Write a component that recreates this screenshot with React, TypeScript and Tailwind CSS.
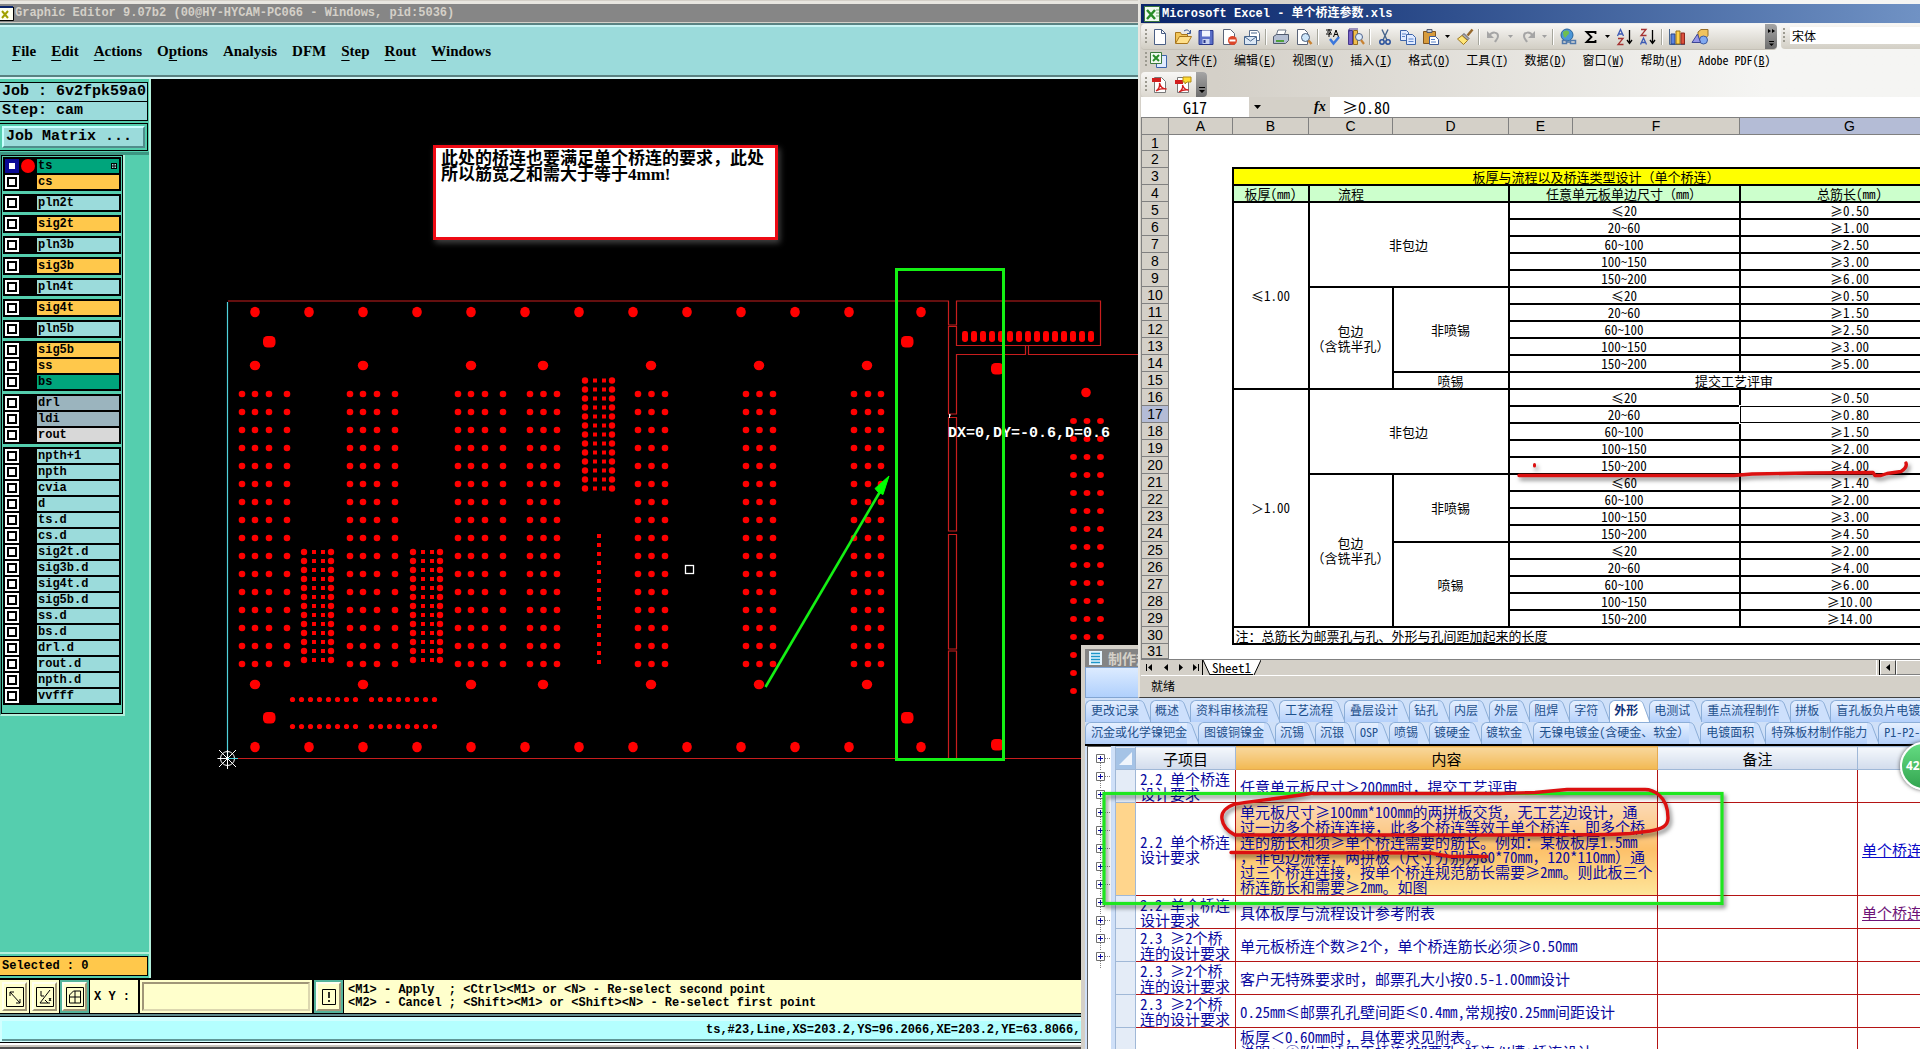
import type { ReactNode } from "react";
import clsx from "clsx";

/* ---------- Graphic editor data ---------- */

type Layer = { name: string; tone: string };

const CYAN = "bg-[#9bdbdb]";
const GOLD = "bg-[#ffc84b]";
const GREEN = "bg-[#00a57c]";
const SLATE = "bg-[#9bb4be]";

const layer = (name: string, tone: string): Layer => ({ name, tone });

const layerGroups: Layer[][] = [
    [layer("ts", GREEN), layer("cs", GOLD)],
    [layer("pln2t", CYAN)],
    [layer("sig2t", GOLD)],
    [layer("pln3b", CYAN)],
    [layer("sig3b", GOLD)],
    [layer("pln4t", CYAN)],
    [layer("sig4t", GOLD)],
    [layer("pln5b", CYAN)],
    [layer("sig5b", GOLD), layer("ss", GOLD), layer("bs", GREEN)],
    [layer("drl", SLATE), layer("ldi", SLATE), layer("rout", "bg-[#d8d8d8]")],
    [
        "npth+1", "npth", "cvia", "d", "ts.d", "cs.d", "sig2t.d", "sig3b.d", "sig4t.d",
        "sig5b.d", "ss.d", "bs.d", "drl.d", "rout.d", "npth.d", "vvfff"
    ].map((name) => layer(name, CYAN))
];

// [before, underlined letter, after]
const editorMenu = [
    ["", "F", "ile"],
    ["", "E", "dit"],
    ["", "A", "ctions"],
    ["O", "p", "tions"],
    ["Analysis", "", ""],
    ["DFM", "", ""],
    ["", "S", "tep"],
    ["", "R", "out"],
    ["", "W", "indows"]
];

const range = (count: number, start: number, step: number) =>
    Array.from({ length: count }, (_, i) => start + i * step);

const edgeHoles = [...range(12, 255, 54), 921];
const innerHoles = [255, 363, 471, 543, 651, 759, 867];
const pinColumns = [
    242, 255, 269, 287, 350, 363, 377, 395, 458, 471, 485, 503,
    530, 543.5, 557, 638, 651.5, 665, 746, 759.5, 773, 854, 868, 881
];
const denseBlocks = [
    { x: 304, y: 552 },
    { x: 413, y: 552 },
    { x: 585, y: 380.5 }
];

/* ---------- Editor ---------- */

function BoardDrawing() {
    return (
        <svg className="absolute inset-0 h-full w-full" aria-label="Board">
            <g transform="translate(-151 -79)">
                <g fill="none" stroke="#c81e1e" strokeWidth="1.2">
                    <path d="M228 301H948.5V325H956.5V301H1100.5V345.5H956.5V326.5H948.5V414H956.5V354.5H1025.5V345.5M1028.5 345.5V354.5H1200" />
                    <path d="M948.5 417.5H956.5V531H948.5ZM948.5 534.5H956.5V649H948.5ZM948.5 758.5V651H956.5V758.5" />
                    <path d="M228 758.5H948.5M956.5 758.5H1200" />
                </g>
                <path d="M227.5 302V758" stroke="#50d2dc" strokeWidth="1.2" />

                <g fill="#ff0000">
                    {edgeHoles.map((x) => (
                        <g key={x}>
                            <ellipse cx={x} cy="312" rx="4.8" ry="5.3" />
                            <ellipse cx={x} cy="747" rx="4.8" ry="5.3" />
                        </g>
                    ))}
                    {innerHoles.map((x) => (
                        <g key={x}>
                            <ellipse cx={x} cy="365.5" rx="5.2" ry="4.8" />
                            <ellipse cx={x} cy="684.5" rx="5.2" ry="4.8" />
                        </g>
                    ))}
                    {[[269, 341.5], [269, 717.5], [907, 341.5], [907, 717.5], [997, 368.5], [997, 744.5]].map(([x, y]) => (
                        <rect key={`${x}-${y}`} x={x - 6} y={y - 5.5} width="12.5" height="11.5" rx="4.5" />
                    ))}
                    <circle cx="1086" cy="392.5" r="4.8" />

                    {range(16, 394, 18).map((y) =>
                        pinColumns.map((x) => <circle key={`${x}-${y}`} cx={x} cy={y} r="3.3" />)
                    )}
                    {range(16, 421, 18).map((y) =>
                        [1073.5, 1087, 1100.5].map((x) => <ellipse key={`${x}-${y}`} cx={x} cy={y} rx="3.4" ry="2.9" />)
                    )}
                    {denseBlocks.map((block) =>
                        range(13, block.y, 9).map((y) => (
                            <g key={`${block.x}-${y}`}>
                                <circle cx={block.x} cy={y} r="3.2" />
                                <rect x={block.x + 8} y={y - 2} width="4" height="4" />
                                <rect x={block.x + 17} y={y - 2} width="4" height="4" />
                                <circle cx={block.x + 27} cy={y} r="3.2" />
                            </g>
                        ))
                    )}
                    {range(15, 536, 9).map((y) => (
                        <rect key={y} x="597" y={y - 2} width="4" height="4" />
                    ))}
                    {[699.5, 726.5].map((y) =>
                        [...range(8, 292.5, 9), ...range(8, 371.5, 9)].map((x) => (
                            <circle key={`${x}-${y}`} cx={x} cy={y} r="2.6" />
                        ))
                    )}
                    {range(15, 965, 9).map((x) => (
                        <rect key={x} x={x - 3} y="331" width="6" height="11" rx="2.4" />
                    ))}
                </g>

                {/* Datum */}
                <g fill="none" stroke="#fff">
                    <circle cx="227.5" cy="758.5" r="7" />
                    <path d="M217.5 758.5H232M227.5 750V769M219 750L236 767M219 767L236 750" />
                    <path d="M228 758.5H238" stroke="#50d2dc" />
                </g>
                <rect x="685.5" y="565.5" width="8" height="8" fill="none" stroke="#fff" strokeWidth="1.3" />
                <path d="M949.5 414V418M949 415H951" stroke="#fff" />
                <text x="948" y="437" fill="#fff" className="font-['Liberation_Mono',monospace] text-[15px] font-bold">
                    DX=0,DY=-0.6,D=0.6
                </text>

                {/* Markup */}
                <rect x="896.5" y="269.5" width="107" height="490" fill="none" stroke="#14f014" strokeWidth="3" />
                <path d="M765.5 687L881 490" stroke="#14f014" strokeWidth="2.6" />
                <path d="M889 476L875 488.5L878 492L883 494.5Z" fill="#00ff00" stroke="#00ff00" />
            </g>
        </svg>
    );
}

function LayerRow({ name, tone, active }: Layer & { active: boolean }) {
    return (
        <label className="flex h-3.5 items-center">
            <input
                type="checkbox"
                className={clsx(
                    "size-3.5 appearance-none border-2 p-0.5 before:block before:size-1.5 before:bg-white",
                    active ? "border-[#0a0a96] bg-[#0a0a96]" : "border-white bg-black"
                )}
            />
            <span className="flex w-[18px] justify-center">
                {active && <span className="size-3.5 rounded-full bg-[#ff0000]" />}
            </span>
            <span className={clsx("flex h-3.5 flex-1 items-center justify-between pr-0.5 pl-px", tone)}>
                {name}
                {active && (
                    <svg width="6" height="6" viewBox="0 0 6 6" className="text-black">
                        <path d="M0 0h6v6H0z" />
                        <path d="M1 1h1.5v1.5H1zM3.5 1H5v1.5H3.5zM1 3.5h1.5V5H1zM3.5 3.5H5V5H3.5z" fill="#9bdbdb" />
                    </svg>
                )}
            </span>
        </label>
    );
}

function Sidebar() {
    return (
        <aside className="flex w-[151px] shrink-0 flex-col border-r-2 border-[#b4f0dc] bg-[#55ceae] pt-[3px] font-['Liberation_Mono',monospace] text-black">
            <div className="mr-px border border-l-0 border-black bg-[#9bdbdb] pl-0.5 text-[15px] leading-[18px] font-bold whitespace-nowrap">
                Job : 6v2fpk59a0
            </div>
            <div className="mr-px border border-t-0 border-l-0 border-black bg-[#9bdbdb] pl-0.5 text-[15px] leading-[18px] font-bold">
                Step: cam
            </div>
            <div className="mt-0.5 mr-px border border-l-0 border-black p-0.5">
                <button className="block w-full border-2 border-t-[#c8ffff] border-r-[#508c8c] border-b-[#508c8c] border-l-[#c8ffff] bg-[#9bdbdb] pl-0.5 text-left text-[15px] leading-[18px] font-bold">
                    Job Matrix ...
                </button>
            </div>
            <div className="mt-px h-[3px] bg-[#3c9682]" />

            <div className="mr-6 border-r-2 border-b-2 border-l border-[#b4f0dc] border-l-[#3c9682]">
                <div className="flex flex-col gap-[3px] border border-black px-px pt-px pb-2 text-xs leading-[14px] font-bold">
                    {layerGroups.map((group, i) => (
                        <div key={i} className="flex flex-col gap-0.5 bg-black p-0.5">
                            {group.map((item) => (
                                <LayerRow key={item.name} {...item} active={item.name === "ts"} />
                            ))}
                        </div>
                    ))}
                </div>
            </div>

            <div className="mt-auto h-0.5 bg-[#b4f0dc]" />
            <div className="mt-0.5 mr-px mb-0.5 border border-l-0 border-black bg-[#ffc84b] pl-0.5 text-xs leading-[18px] font-bold">
                Selected : 0
            </div>
        </aside>
    );
}

function PromptButton({ label, teal, children }: { label: string; teal?: boolean; children: ReactNode }) {
    return (
        <div className={clsx("border-r border-black p-0.5", teal && "bg-[#55b49b]")}>
            <button
                aria-label={label}
                className="flex h-[29px] w-[25px] items-center justify-center border-2 border-t-[#fffff0] border-r-[#a09678] border-b-[#a09678] border-l-[#fffff0] bg-[#ffffcc]"
            >
                <svg width="18" height="20" viewBox="0 0 18 20" fill="none" stroke="#000">
                    {children}
                </svg>
            </button>
        </div>
    );
}

function PromptBar() {
    return (
        <div className="flex h-[33px] shrink-0 bg-[#ffffcc] font-['Liberation_Mono',monospace] text-xs font-bold text-black">
            <PromptButton label="Snap">
                <path d="M.5 .5h17v19H.5zM4 5L14 16M4 9V5h4M14 12v4h-4" />
            </PromptButton>
            <PromptButton label="Angle">
                <path d="M.5 .5h17v19H.5zM14 3L4 16h10M5 4v5h3M9 13l3 3M13 11l2 3M15 11l-2 3" />
            </PromptButton>
            <PromptButton label="Grid" teal>
                <path d="M.5 .5h17v19H.5zM3.500 8l4-4h7v12h-11zM9 4v12M3 10h12" />
            </PromptButton>
            <label htmlFor="xy" className="flex w-12 items-center pl-1">
                X Y :
            </label>
            <div className="border-x-2 border-black p-0.5">
                <input
                    id="xy"
                    className="block h-[29px] w-[168px] border-2 border-t-[#a09678] border-r-[#dcd7af] border-b-[#dcd7af] border-l-[#a09678] bg-[#ffffcc] px-1 outline-none"
                />
            </div>
            <PromptButton label="Execute" teal>
                <path d="M2.500 2.500h13v15h-13z" />
                <path d="M9 5v6M9 13v2" strokeWidth="1.600" />
            </PromptButton>
            <div className="flex flex-1 flex-col justify-center pl-1 leading-[13px] whitespace-pre">
                <div>{"<M1> - Apply  ; <Ctrl><M1> or <N> - Re-select second point"}</div>
                <div>{"<M2> - Cancel ; <Shift><M1> or <Shift><N> - Re-select first point"}</div>
            </div>
        </div>
    );
}

function GraphicEditor() {
    return (
        <section className="flex h-full flex-col">
            <div className="h-1 shrink-0 border-t border-[#d4d0c8] bg-[#e8e6e0]" />
            <header className="flex h-[19px] shrink-0 items-center border-b border-[#d4d0c8] bg-[#868686] font-['Liberation_Mono',monospace] text-xs font-bold text-[#d4d0c8]">
                <svg width="15" height="16" viewBox="0 0 15 16">
                    <path d="M0 1h13v14H0z" fill="#fffff0" />
                    <path d="M0 1h13v2H0z" fill="#0a246a" />
                    <path d="M2 6l6 7M8 6l-6 7" stroke="#a0a000" strokeWidth="2" />
                    <path d="M13.500 2v13.500H0" fill="none" stroke="#000" />
                </svg>
                <h1>Graphic Editor 9.07b2 (00@HY-HYCAM-PC066 - Windows, pid:5036)</h1>
            </header>
            <nav className="flex h-[54px] shrink-0 items-center gap-[15px] border-y-2 border-[#5a8282] bg-[#9bdbdb] px-3 pt-0.5 font-['Liberation_Serif',serif] text-[15px] font-bold text-black shadow-[inset_0_2px_0_#c8f5f5]">
                {editorMenu.map(([before, key, after]) => (
                    <button key={before + key + after}>
                        {before}
                        {key && <span className="underline underline-offset-4">{key}</span>}
                        {after}
                    </button>
                ))}
            </nav>
            <div className="h-0.5 shrink-0 bg-[#d2f5f5]" />

            <div className="flex min-h-0 flex-1 bg-black pb-0.5">
                <Sidebar />
                <div className="relative flex-1">
                    <BoardDrawing />
                    <p className="absolute top-[66px] left-[282px] h-[95px] w-[345px] border-3 border-[#ee0a14] bg-white px-[5px] pt-[3px] font-['Liberation_Serif','Noto_Sans_CJK_SC',serif] text-[17px] leading-4 font-bold text-black shadow-[2px_3px_6px_#444]">
                        此处的桥连也要满足单个桥连的要求，此处所以筋宽之和需大于等于4mm!
                    </p>
                </div>
            </div>

            <PromptBar />
            <div className="h-[3px] shrink-0 border-t border-black bg-[#5f8a8c]" />
            <footer className="h-[27px] shrink-0 border-y border-black bg-[#d2ffff] font-['Liberation_Mono',monospace] text-xs font-bold text-black">
                <div className="mx-0.5 mt-1 h-5 border-b-2 border-[#5f9696] bg-[#b4ffff] pl-[704px] leading-[18px] whitespace-nowrap">
                    ts,#23,Line,XS=203.2,YS=96.2066,XE=203.2,YE=63.8066,
                </div>
            </footer>
            <div className="h-1 shrink-0 border-t-2 border-white bg-[#c8c4bc]" />
            <div className="h-0.5 shrink-0 bg-[#505050]" />
        </section>
    );
}

/* ---------- Excel ---------- */

const CJK = "font-['Noto_Sans_Mono_CJK_SC','Noto_Sans_CJK_SC',sans-serif]";

const excelMenu = [
    ["文件", "F"],
    ["编辑", "E"],
    ["视图", "V"],
    ["插入", "I"],
    ["格式", "O"],
    ["工具", "T"],
    ["数据", "D"],
    ["窗口", "W"],
    ["帮助", "H"],
    ["Adobe PDF", "B"]
];

function Tool({ label, children }: { label: string; children: ReactNode }) {
    return (
        <button aria-label={label} className="flex w-[23px] justify-center">
            <svg width="18" height="18" viewBox="0 0 18 18" fill="none">
                {children}
            </svg>
        </button>
    );
}

function Caret({ dim }: { dim?: boolean }) {
    return (
        <button aria-label="More" className="flex w-[11px] justify-center">
            <svg width="5" height="3" viewBox="0 0 5 3" className={dim ? "fill-[#a0a0a0]" : "fill-black"}>
                <path d="M0 0h5L2.500 3z" />
            </svg>
        </button>
    );
}

const Separator = () => (
    <span className="flex w-1.5 justify-center">
        <span className="h-4 w-0.5 border-r border-white bg-[#a6a69c]" />
    </span>
);

function Grip() {
    return (
        <svg width="3" height="16" viewBox="0 0 3 16" fill="#9c9a90">
            <path d="M0 0h2v2H0zM0 4h2v2H0zM0 8h2v2H0zM0 12h2v2H0z" />
        </svg>
    );
}

const page = "M3.500 1.500h7l4 4v11h-11z";

function StandardToolbar() {
    return (
        <div className="flex h-[25px] items-center">
            <div className="flex h-full w-[636px] shrink-0 items-center rounded-sm bg-linear-to-b from-[#f8f7f5] to-[#d2cec4] pl-1 shadow-[0_1px_0_#c4c0b6]">
                <Grip />
                <Tool label="New">
                    <path d={page} fill="#fff" stroke="#4a5f85" />
                    <path d="M10.500 1.500v4h4" stroke="#4a5f85" />
                </Tool>
                <Tool label="Open">
                    <path d="M1.500 15V4.500h5l1 2h6V9" fill="#f2c65a" stroke="#a9761a" />
                    <path d="M1.500 15.500l4-7h12l-4 7z" fill="#ffe08a" stroke="#a9761a" />
                    <path d="M10 3c3-2 5-1 6 2M16.500 2v3.500H13" stroke="#3c5a96" />
                </Tool>
                <Tool label="Save">
                    <path d="M2 2.500h14v14H2z" fill="#5a6ec8" stroke="#28378c" />
                    <path d="M5 2.500h8v6H5z" fill="#f0f4ff" />
                    <path d="M5.500 11h7v5h-7z" fill="#c8d2f0" />
                    <path d="M6.500 12h2v3h-2z" fill="#28378c" />
                </Tool>
                <Tool label="Permission">
                    <path d={page} fill="#fff" stroke="#5a6478" />
                    <circle cx="12.500" cy="12.500" r="4.500" fill="#dc4628" />
                    <path d="M9.500 12.500h6" stroke="#fff" strokeWidth="2" />
                </Tool>
                <Tool label="Mail">
                    <path d="M6.500 2.500h8l2 3v7h-10z" fill="#fff" stroke="#5a6e8c" />
                    <path d="M1.500 8.500h12v8h-12z" fill="#dce8f5" stroke="#46648c" />
                    <path d="M2 9l5.500 4L13 9M8 5h6" stroke="#46648c" />
                </Tool>
                <Separator />
                <Tool label="Print">
                    <path d="M6 2h8l-2 6H4z" fill="#fff" stroke="#6e7888" />
                    <path d="M1.500 8.500l3-2h12v6l-3 3h-12z" fill="#b4bed2" stroke="#505a6e" />
                    <path d="M4 13h8" stroke="#50a03c" strokeWidth="2" />
                </Tool>
                <Tool label="Preview">
                    <path d="M2.500 1.500h7l3 3v12h-10z" fill="#fff" stroke="#5a6478" />
                    <circle cx="10.500" cy="9.500" r="4" fill="#cde6fa" stroke="#465a78" />
                    <path d="M13.500 12.500l3 3.500" stroke="#c88232" strokeWidth="2.500" />
                </Tool>
                <Separator />
                <Tool label="Spelling">
                    <path d="M2 2h6M5 1v2M3 4h4L5 6v3M2 6h6M9.500 9L12 2l2.500 7M10.500 6.500h3" stroke="#000" />
                    <path d="M6 11l3.500 4.500L15 9" stroke="#3c78dc" strokeWidth="2.500" />
                </Tool>
                <Tool label="Research">
                    <path d="M1.500 2.500h4v14h-4z" fill="#7864c8" stroke="#46378c" />
                    <path d="M6.500 2.500h4v14h-4z" fill="#f0be50" stroke="#966e1e" />
                    <path d="M2 1h9M2 1v3" stroke="#46378c" />
                    <circle cx="12" cy="9" r="3.500" fill="#dcebfa" stroke="#50648c" />
                    <path d="M14 12l3 4" stroke="#c88232" strokeWidth="2.200" />
                </Tool>
                <Separator />
                <Tool label="Cut">
                    <path d="M6 1.500l5 10.500M12 1.500L7 12" stroke="#46648c" strokeWidth="1.400" />
                    <circle cx="6" cy="14" r="2.200" stroke="#28509b" strokeWidth="1.500" />
                    <circle cx="12" cy="14" r="2.200" stroke="#28509b" strokeWidth="1.500" />
                </Tool>
                <Tool label="Copy">
                    <path d="M1.500 2.500h6l2 2v8h-8z" fill="#e1ebff" stroke="#3c64aa" />
                    <path d="M7.500 6.500h6l3 3v7h-9z" fill="#e1ebff" stroke="#3c64aa" />
                    <path d="M9.500 11h5M9.500 13.500h5M3 6h4M3 8.500h3" stroke="#5a82c8" />
                </Tool>
                <Tool label="Paste">
                    <path d="M1.500 3.500h12v12h-12z" fill="#d79b3c" stroke="#82551e" />
                    <path d="M5 1.500h5v3H5z" fill="#c8cdd7" stroke="#505a6e" />
                    <path d="M7.500 8.500h6l3 3v5h-9z" fill="#fff" stroke="#3c5a96" />
                    <path d="M9 11.500h4M9 14h5" stroke="#5a82c8" />
                </Tool>
                <Caret />
                <Tool label="Format painter">
                    <path d="M16.500 1.500l-5 6" stroke="#96692d" strokeWidth="2.500" />
                    <path d="M8 5.500l5 5-1.500 1.500-5.500-4.500z" fill="#aaaaaf" stroke="#5a5a64" />
                    <path d="M6 7.500l5.500 5-4 4-6-5.500z" fill="#ffe678" stroke="#a0781e" />
                </Tool>
                <Separator />
                <Tool label="Undo">
                    <path d="M4 8c3-5 9-4 9 0 0 3-2 4-3 6" stroke="#a5a5a5" strokeWidth="2" />
                    <path d="M2 3v7h7z" fill="#a5a5a5" />
                </Tool>
                <Caret dim />
                <Tool label="Redo">
                    <path d="M14 8c-3-5-9-4-9 0 0 3 2 4 3 6" stroke="#a5a5a5" strokeWidth="2" />
                    <path d="M16 3v7H9z" fill="#a5a5a5" />
                </Tool>
                <Caret dim />
                <Separator />
                <Tool label="Hyperlink">
                    <circle cx="8" cy="7" r="6" fill="#4b96d7" stroke="#28649b" />
                    <path d="M4 4c2-2 5-2 6 0s-2 3-3 5-3-1-3-5z" fill="#6ebe50" />
                    <path d="M3.500 12.500h4v3h-4zM11.500 12.500h5v3h-5z" stroke="#5078aa" strokeWidth="1.500" />
                    <path d="M7 14h5" stroke="#5078aa" strokeWidth="1.500" />
                </Tool>
                <Tool label="Sum">
                    <path d="M13.500 6V4H4.500l5 5-5 5h9v-2" stroke="#000" strokeWidth="1.800" />
                </Tool>
                <Caret />
                <Tool label="Sort ascending">
                    <path d="M1.500 8l3-6.500L7.500 8M2.500 6h4" stroke="#3c5ab4" strokeWidth="1.300" />
                    <path d="M2 10.500h5l-5 6h5.500" stroke="#a53232" strokeWidth="1.300" />
                    <path d="M13.500 2v13M11 12l2.500 3.500L16 12" stroke="#000" strokeWidth="1.300" />
                </Tool>
                <Tool label="Sort descending">
                    <path d="M2 1.500h5l-5 6h5.500" stroke="#a53232" strokeWidth="1.300" />
                    <path d="M1.500 16.500l3-6.500 3 6.500M2.500 14.500h4" stroke="#3c5ab4" strokeWidth="1.300" />
                    <path d="M13.500 2v13M11 12l2.500 3.500L16 12" stroke="#000" strokeWidth="1.300" />
                </Tool>
                <Separator />
                <Tool label="Chart">
                    <path d="M1.500 1v15.500H17" stroke="#46648c" />
                    <path d="M3 6h4v10H3z" fill="#5a82dc" stroke="#28468c" />
                    <path d="M8 3h4v13H8z" fill="#ffd24b" stroke="#966e14" />
                    <path d="M13 5h3.500v11H13z" fill="#dc503c" stroke="#8c281e" />
                </Tool>
                <Tool label="Drawing">
                    <path d="M7 4l3-2.500h7v6l-2.500 3H7z" fill="#f0c35f" stroke="#966e28" />
                    <circle cx="12.500" cy="12" r="4" fill="#82aaf0" stroke="#3c5aa0" />
                    <path d="M1 14.500L6.500 6l3 8.500z" fill="#9696e6" stroke="#3c4696" />
                </Tool>
                <button aria-label="Toolbar options" className="ml-auto flex h-full w-3 items-center justify-center rounded-r-sm bg-linear-to-b from-[#a5a5a5] to-[#6e6e6e]">
                    <svg width="7" height="20" viewBox="0 0 7 20">
                        <path d="M0 2l3 2-3 2zM4 2l3 2-3 2zM1 14h5v1H1zM1 16.500h5L3.500 19z" />
                    </svg>
                </button>
            </div>
            <div className="ml-1 flex h-full flex-1 items-center gap-1 rounded-l-sm bg-linear-to-b from-[#f8f7f5] to-[#d2cec4] pb-0.5 pl-0.5">
                <Grip />
                <input aria-label="Font" defaultValue="宋体" className="h-[17px] min-w-0 flex-1 bg-white pl-0.5 text-xs outline-none" />
            </div>
        </div>
    );
}

const columns = ["A", "B", "C", "D", "E", "F", "G"];

type Cell = { text: ReactNode; rows?: number; cols?: number; look?: string; picked?: boolean };

const size = (text: string): Cell => ({ text, cols: 2 });
const total = (text: string): Cell => ({ text });
const halfHole = (
    <>
        包边
        <br />
        （含铣半孔）
    </>
);

// Cells from column B on; sheet rows 3 to 30
const sheet: Cell[][] = [
    [{ text: "板厚与流程以及桥连类型设计（单个桥连）", cols: 6, look: "bg-[#ffff00]" }],
    [
        { text: "板厚(mm)", look: "bg-[#ccffcc]" },
        { text: "流程", look: "bg-[#ccffcc] border-r-0" },
        { text: "", look: "bg-[#ccffcc] border-l-0" },
        { text: "任意单元板单边尺寸（mm）", cols: 2, look: "bg-[#ccffcc]" },
        { text: "总筋长(mm)", look: "bg-[#ccffcc]" }
    ],
    [{ text: "≤1.00", rows: 11 }, { text: "非包边", rows: 5, cols: 2 }, size("≤20"), total("≥0.50")],
    [size("20~60"), total("≥1.00")],
    [size("60~100"), total("≥2.50")],
    [size("100~150"), total("≥3.00")],
    [size("150~200"), total("≥6.00")],
    [{ text: halfHole, rows: 6 }, { text: "非喷锡", rows: 5 }, size("≤20"), total("≥0.50")],
    [size("20~60"), total("≥1.50")],
    [size("60~100"), total("≥2.50")],
    [size("100~150"), total("≥3.00")],
    [size("150~200"), total("≥5.00")],
    [{ text: "喷锡" }, { text: "提交工艺评审", cols: 3 }],
    [{ text: "＞1.00", rows: 14 }, { text: "非包边", rows: 5, cols: 2 }, size("≤20"), total("≥0.50")],
    [size("20~60"), { text: "≥0.80", picked: true }],
    [size("60~100"), total("≥1.50")],
    [size("100~150"), total("≥2.00")],
    [size("150~200"), total("≥4.00")],
    [{ text: halfHole, rows: 9 }, { text: "非喷锡", rows: 4 }, size("≤60"), total("≥1.40")],
    [size("60~100"), total("≥2.00")],
    [size("100~150"), total("≥3.00")],
    [size("150~200"), total("≥4.50")],
    [{ text: "喷锡", rows: 5 }, size("≤20"), total("≥2.00")],
    [size("20~60"), total("≥4.00")],
    [size("60~100"), total("≥6.00")],
    [size("100~150"), total("≥10.00")],
    [size("150~200"), total("≥14.00")],
    [{ text: "注：总筋长为邮票孔与孔、外形与孔间距加起来的长度", cols: 6, look: "text-left pl-0.5" }]
];

function RowHead({ n }: { n: number }) {
    return (
        <th
            className={clsx(
                "border border-[#808080] p-0 font-['Liberation_Sans',sans-serif] text-sm leading-[14px] font-normal",
                n === 17 ? "bg-[#b4bcd6]" : "bg-[#d4d0c8]"
            )}
        >
            {n}
        </th>
    );
}

function Spreadsheet() {
    return (
        <div className="overflow-hidden bg-white">
            <table className="w-[818px] table-fixed border-collapse text-center text-[13px] leading-[15px] whitespace-nowrap">
                <colgroup>
                    <col className="w-[27px]" />
                    <col className="w-16" />
                    <col className="w-[76px]" />
                    <col className="w-[84px]" />
                    <col className="w-[116px]" />
                    <col className="w-16" />
                    <col className="w-[167px]" />
                    <col className="w-[220px]" />
                </colgroup>
                <thead>
                    <tr className="h-[17px] font-['Liberation_Sans',sans-serif] text-sm leading-4">
                        <th className="border border-[#808080] bg-[#d4d0c8] p-0" />
                        {columns.map((name) => (
                            <th
                                key={name}
                                className={clsx(
                                    "border border-[#808080] p-0 font-normal",
                                    name === "G" ? "bg-[#b4bcd6]" : "bg-[#d4d0c8]"
                                )}
                            >
                                {name}
                            </th>
                        ))}
                    </tr>
                </thead>
                <tbody>
                    <tr className="h-4">
                        <RowHead n={1} />
                        <td colSpan={7} />
                    </tr>
                    <tr className="h-[17px]">
                        <RowHead n={2} />
                        <td colSpan={7} />
                    </tr>
                    {sheet.map((cells, i) => (
                        <tr key={i} className="h-[17px]">
                            <RowHead n={i + 3} />
                            <td />
                            {cells.map((cell, j) => (
                                <td
                                    key={j}
                                    rowSpan={cell.rows}
                                    colSpan={cell.cols}
                                    className={clsx("relative border-2 border-black p-0", cell.look)}
                                >
                                    {cell.text}
                                    {cell.picked && (
                                        <span className="absolute -inset-0.5 border border-white">
                                            <span className="block h-full border border-black" />
                                        </span>
                                    )}
                                </td>
                            ))}
                        </tr>
                    ))}
                    <tr className="h-[15px] leading-3">
                        <RowHead n={31} />
                        <td colSpan={7} />
                    </tr>
                </tbody>
            </table>
        </div>
    );
}

function ExcelWindow() {
    return (
        <section
            className={clsx(
                "absolute top-0 right-0 left-[1138px] border-b border-l-2 border-b-[#404040] border-l-[#e8e6e0] bg-linear-to-r from-[#d4d0c8] from-10% to-[#f5f5f3] to-80% pt-1 pl-px text-black",
                CJK
            )}
        >
            <header className="flex h-[19px] items-center gap-0.5 bg-linear-to-r from-[#0a246a] to-[#7092c4] pl-[3px] font-['Liberation_Mono','Noto_Sans_CJK_SC',monospace] text-xs font-bold text-white">
                <svg width="16" height="16" viewBox="0 0 16 16" className="shrink-0">
                    <path d="M.5 .5h15v15H.5z" fill="#f0faf0" stroke="#3c783c" />
                    <path d="M3 4l8 9M11 4l-8 9" stroke="#288c28" strokeWidth="2.500" />
                    <path d="M12 4h3M12 7h3M12 10h3" stroke="#78aa78" />
                </svg>
                <h2>Microsoft Excel - 单个桥连参数.xls</h2>
            </header>
            <div className="pt-px">
                <StandardToolbar />
            </div>

            <nav className="flex h-[23px] items-center gap-4 pb-0.5 pl-1 text-xs">
                <span className="flex items-center gap-0.5">
                    <Grip />
                    <svg width="18" height="18" viewBox="0 0 18 18">
                        <path d="M6.500 4.500h10v12h-10z" fill="#e1ebff" stroke="#3c64aa" />
                        <path d="M.5 1.500h11v11H.5z" fill="#f0faf0" stroke="#3c783c" />
                        <path d="M3 4l6 6M9 4l-6 6" stroke="#288c28" strokeWidth="2" />
                    </svg>
                </span>
                <div className="-ml-2 flex gap-4">
                    {excelMenu.map(([label, key]) => (
                        <button key={label}>
                            {label}(<span className="underline">{key}</span>)
                        </button>
                    ))}
                </div>
            </nav>

            <div className="flex h-[25px] w-[66px] items-center rounded-sm bg-linear-to-b from-[#f8f7f5] to-[#dcd8d0] pl-1">
                <Grip />
                <Tool label="Convert to PDF">
                    <path d={page} fill="#fff" stroke="#787878" />
                    <path d="M1 2h9v4H1z" fill="#d21e1e" />
                    <path d="M5 15c3-2 4-5 3.500-8 1 4 3 6 7 6-4-1-7 0-10.500 2z" stroke="#d21e1e" strokeWidth="1.300" />
                </Tool>
                <Tool label="Convert and comment">
                    <path d={page} fill="#fff" stroke="#787878" />
                    <path d="M1 4h8v4H1z" fill="#d21e1e" />
                    <path d="M5 16c3-2 4-5 3.500-7 1 3 3 5 6 5-4-1-6 0-9.500 2z" stroke="#d21e1e" strokeWidth="1.300" />
                    <path d="M9 1h8v5h-4l-2 2V6H9z" fill="#ffdc32" stroke="#b48c14" />
                </Tool>
                <button aria-label="PDF toolbar options" className="ml-auto flex h-full w-[11px] items-end justify-center rounded-r-sm bg-linear-to-b from-[#a5a5a5] to-[#6e6e6e] pb-1">
                    <svg width="6" height="6" viewBox="0 0 6 6">
                        <path d="M0 0h6v1H0zM0 3h6L3 6z" />
                    </svg>
                </button>
            </div>

            {/* Formula bar */}
            <div className="flex h-5 items-center bg-[#d4d0c8] text-base">
                <input aria-label="Name box" defaultValue="G17" className="h-full w-[108px] bg-white text-center outline-none" />
                <button aria-label="Names" className="flex w-[17px] justify-center">
                    <svg width="7" height="4" viewBox="0 0 7 4">
                        <path d="M0 0h7L3.500 4z" />
                    </svg>
                </button>
                <span className="ml-auto w-4 font-['Liberation_Serif',serif] text-sm font-bold italic">fx</span>
                <input aria-label="Formula" defaultValue="≥0.80" className="h-full w-[590px] bg-white pl-3 outline-none" />
            </div>

            <Spreadsheet />

            <div className="flex h-4 border-t border-[#808080] bg-[#d4d0c8] text-[13px] leading-[15px]">
                <svg width="62" height="15" viewBox="0 0 62 15" className="shrink-0">
                    <path d="M5 4h1v7H5zM11 4v7L7 7.500zM27 4v7l-4-3.500zM38 4v7l4-3.500zM52 4v7l4-3.500zM57 4h1v7h-1zM61 0h1v15h-1z" />
                </svg>
                <svg width="7" height="15" viewBox="0 0 7 15" className="shrink-0">
                    <path d="M0 0h7v15z" fill="#fff" />
                    <path d="M0 0l7 15" stroke="#000" />
                </svg>
                <button className="border-b border-black bg-white px-0.5 underline">Sheet1</button>
                <svg width="8" height="15" viewBox="0 0 8 15" className="shrink-0">
                    <path d="M0 0h8L1 15H0z" fill="#fff" />
                    <path d="M8 0L1 15" stroke="#000" />
                </svg>
                <div className="ml-auto flex">
                    <span className="w-1 border-x border-l-white border-r-black" />
                    <button aria-label="Scroll left" className="flex w-4 items-center justify-center border border-t-white border-r-[#404040] border-b-[#808080] border-l-white">
                        <svg width="4" height="7" viewBox="0 0 4 7">
                            <path d="M4 0v7L0 3.500z" />
                        </svg>
                    </button>
                    <span className="w-6 border border-r-0 border-white border-b-[#808080]" />
                </div>
            </div>
            <footer className="h-[22px] border-t border-white bg-[#d4d0c8] pl-2.5 text-xs leading-5">就绪</footer>
        </section>
    );
}

/* ---------- Specification window ---------- */

const tabRows = [
    [
        "更改记录", "概述", "资料审核流程", "工艺流程", "叠层设计", "钻孔", "内层", "外层", "阻焊",
        "字符", "外形", "电测试", "重点流程制作", "拼板", "盲孔板负片电镀"
    ],
    [
        "沉金或化学镍钯金", "图镀铜镍金", "沉锡", "沉银", "OSP", "喷锡", "镀硬金", "镀软金",
        "无镍电镀金(含硬金、软金）", "电镀面积", "特殊板材制作能力", "P1-P2-P3"
    ]
];

function SpecTab({ label }: { label: string }) {
    const active = label === "外形";
    return (
        <button className="flex h-[22px] shrink-0">
            <span
                className={clsx(
                    "h-full rounded-tl-md border-t border-l border-[#8caed8] leading-[18px]",
                    label.length < 4 ? "pl-1" : "pl-[5px]",
                    active
                        ? "bg-white font-bold text-[#0f3278]"
                        : "bg-linear-to-b from-[#e6f0ff] to-[#b4d0fa] text-[#1e508c]"
                )}
            >
                {label}
            </span>
            <svg width="11" height="22" viewBox="0 0 11 22" className="overflow-visible">
                <path d="M0 0C4 0 5 3 6 6L11 22H0z" className={active ? "fill-white" : "fill-[#cde0fc]"} />
                <path d="M0 .5C4 .5 5 3 6 6L12 22" fill="none" stroke="#8caed8" />
            </svg>
        </button>
    );
}

const blockText = [
    "单元板尺寸≥100mm*100mm的两拼板交货，无工艺边设计，通",
    "过一边多个桥连连接，此多个桥连等效于单个桥连，即多个桥",
    "连的筋长和须≥单个桥连需要的筋长。例如：某板板厚1.5mm",
    "，非包边流程，两拼板（尺寸分别为80*70mm，120*110mm）通",
    "过三个桥连连接，按单个桥连规范筋长需要≥2mm。则此板三个",
    "桥连筋长和需要≥2mm。如图"
];

type SpecRow = { title: string[]; body: string[]; link?: string; visited?: boolean; height: string; picked?: boolean };

const single = ["2.2 单个桥连", "设计要求"];
const multi = ["2.3 ≥2个桥", "连的设计要求"];

const specRows: SpecRow[] = [
    { title: single, body: ["任意单元板尺寸＞200mm时，提交工艺评审"], height: "h-[33px]" },
    { title: single, body: blockText, link: "单个桥连参数", height: "h-[93px]", picked: true },
    { title: single, body: ["具体板厚与流程设计参考附表"], link: "单个桥连参数", visited: true, height: "h-[33px]" },
    { title: multi, body: ["单元板桥连个数≥2个，单个桥连筋长必须≥0.50mm"], height: "h-[33px]" },
    { title: multi, body: ["客户无特殊要求时，邮票孔大小按0.5-1.00mm设计"], height: "h-[33px]" },
    { title: multi, body: ["0.25mm≤邮票孔孔壁间距≤0.4mm,常规按0.25mm间距设计"], height: "h-[33px]" },
    { title: [], body: ["板厚＜0.60mm时，具体要求见附表。", "说明：①附表适用于桥连(邮票孔+桥连/V槽+桥连设计"], height: "h-[33px]" }
];

function Lines({ items }: { items: string[] }) {
    return (
        <>
            {items.map((line, i) => (
                <div key={i}>{line}</div>
            ))}
        </>
    );
}

function SpecTable() {
    const head = "border border-[#a0b8d7] bg-linear-to-b from-[#f5f8fc] to-[#d2dcec] p-0 font-normal";
    const cell = "border border-[#b41414] px-1 py-0";
    return (
        <table className="w-[902px] table-fixed border-collapse text-[15px] leading-[15px] whitespace-nowrap text-[#0a0aa0]">
            <colgroup>
                <col className="w-5" />
                <col className="w-[100px]" />
                <col className="w-[422px]" />
                <col className="w-[200px]" />
                <col className="w-40" />
            </colgroup>
            <thead className="text-black">
                <tr className="h-[23px]">
                    <th className={head}>
                        <svg width="19" height="21" viewBox="0 0 19 21" className="bg-[#a5c3e6]">
                            <path d="M16 4v13H3z" fill="#f0f5fc" />
                        </svg>
                    </th>
                    <th className={head}>子项目</th>
                    <th className="border border-[#e6aa50] bg-linear-to-b from-[#f8d79b] to-[#f2b950] p-0 font-normal">内容</th>
                    <th className={head}>备注</th>
                    <th className={head} />
                </tr>
            </thead>
            <tbody>
                {specRows.map((row, i) => (
                    <tr key={i} className={row.height}>
                        <td className={clsx("border border-[#a0b8d7] p-0", row.picked ? "bg-[#ffd58c]" : "bg-[#e4ecf7]")} />
                        <td className={cell}>
                            <Lines items={row.title} />
                        </td>
                        <td className={clsx(cell, row.picked && "bg-linear-to-b from-[#fbd9b4] via-[#fdc069] to-[#fde69b]")}>
                            <Lines items={row.body} />
                        </td>
                        <td className={cell} />
                        <td className={cell}>
                            {row.link && (
                                <a href="#" className={clsx("underline", row.visited ? "text-[#6e1478]" : "text-[#0a0ac8]")}>
                                    {row.link}
                                </a>
                            )}
                        </td>
                    </tr>
                ))}
            </tbody>
        </table>
    );
}

function TreeRail() {
    return (
        <div className="ml-0.5 w-6 shrink-0 border-t border-l border-[#606060] bg-white pt-1.5">
            {range(12, 0, 1).map((i) => (
                <button key={i} aria-label="Expand" className="block h-[18px] w-full">
                    <svg width="22" height="18" viewBox="0 0 22 18" fill="none">
                        <path d="M12.500 10v8M17 5.500h5" stroke="#808080" strokeDasharray="1 1" />
                        <path d="M8.500 1.500h8v8h-8z" stroke="#707070" />
                        <path d="M10 5.500h5M12.500 3v5" stroke="#0a0aa0" />
                    </svg>
                </button>
            ))}
        </div>
    );
}

function SpecWindow() {
    return (
        <section
            className={clsx(
                "absolute top-[645px] right-0 bottom-0 left-[1081px] flex flex-col overflow-hidden border-t-4 border-l-4 border-[#d4d0c8] bg-[#cfe0f8]",
                CJK
            )}
        >
            <header className="flex h-[18px] shrink-0 items-center gap-1.5 bg-[#848484] pl-1 text-sm leading-[18px] font-bold text-[#d4d0c8]">
                <svg width="13" height="14" viewBox="0 0 13 14">
                    <path d="M0 0h13v14H0z" fill="#e6f5ff" />
                    <path d="M2 2.500h9M2 5.500h9M2 8.500h9M2 11.500h9" stroke="#1e96c8" strokeWidth="1.500" />
                </svg>
                <h2>制作规</h2>
            </header>
            <div className="h-[31px] shrink-0 border border-[#82a5d2] bg-linear-to-b from-[#dcebff] to-[#b0d0fc]" />
            <div className="shrink-0 border-b-2 border-black pt-0.5 text-xs">
                {tabRows.map((row, i) => (
                    <div key={i} className="flex">
                        {row.map((label) => (
                            <SpecTab key={label} label={label} />
                        ))}
                    </div>
                ))}
            </div>
            <div className="flex min-h-0 flex-1">
                <TreeRail />
                <div className="ml-1 min-w-0 flex-1 overflow-hidden bg-white">
                    <SpecTable />
                </div>
            </div>
            <button className="absolute top-[93px] -right-7 size-12 rounded-full border-2 border-white bg-linear-to-b from-[#64dc82] to-[#32a550] pl-1 text-left font-['Noto_Sans',sans-serif] text-xs font-bold text-white shadow-[0_0_4px_#505050]">
                42
            </button>
        </section>
    );
}

/* Hand-drawn marks over both windows */
function Markup() {
    return (
        <svg className="pointer-events-none absolute inset-0 h-full w-full drop-shadow-[2px_3px_2px_rgba(0,0,0,0.5)]" fill="none">
            <rect x="1104" y="793.500" width="618" height="110" stroke="#1ee61e" strokeWidth="3.200" />
            <g stroke="#dc1010" strokeWidth="3.400" strokeLinecap="round" strokeLinejoin="round">
                <path d="M1313 793C1290 797 1255 801 1235 804C1224 808 1221 813 1222 819C1223 827 1229 832 1235 835H1500C1550 834 1600 836 1630 833.500L1650 831C1662 829 1668 826 1668 818C1668 808 1665 800 1659 795C1654 791 1649 789.500 1645 789.500H1567L1535 792.500L1500 793.500H1313" />
                <path d="M1231 852.500L1430 853L1450 856.500H1487" />
                <path d="M1519 475.500H1734L1752 474L1808 473L1873 472.500L1875 475.500H1881L1887 473.500L1901 471.500C1905 469 1907 466 1906 463" />
                <path d="M1534.500 464.500v1.500" strokeWidth="3" />
            </g>
        </svg>
    );
}

export default function App() {
    return (
        <main className="relative h-screen overflow-hidden bg-black">
            <GraphicEditor />
            <SpecWindow />
            <ExcelWindow />
            <Markup />
        </main>
    );
}
